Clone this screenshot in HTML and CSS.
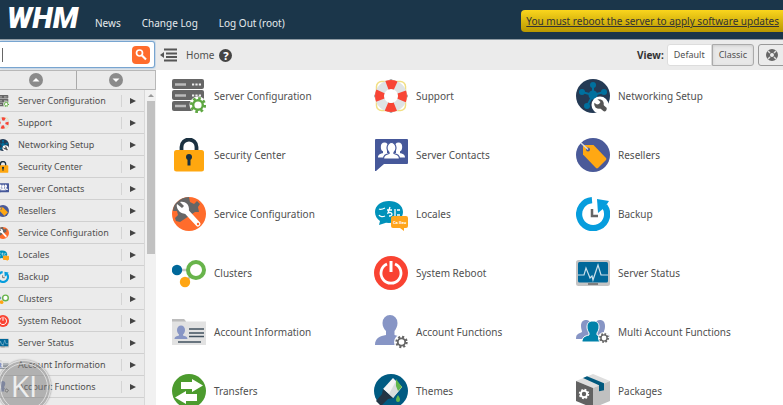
FILE: index.html
```html
<!DOCTYPE html>
<html lang="en">
<head>
<meta charset="utf-8">
<title>WHM</title>
<link rel="stylesheet" href="styles.css">
</head>
<body>
<svg class="defs" aria-hidden="true">
  <symbol id="server-config" viewBox="0 0 34 34">
    <g fill="#666"><rect y="0" width="32" height="10" rx="2"/><rect y="11" width="32" height="10" rx="2"/><rect y="22" width="32" height="10" rx="2"/></g>
    <path d="M3 5.500h11M3 16.500h11M3 27h11" stroke="#bbb" stroke-width="2.500"/>
    <path d="M20 5.500h9M20 16.500h9" stroke="#eee" stroke-width="2.200" stroke-dasharray="2.200 1.200"/>
    <circle cx="26" cy="26" r="8.500" fill="#fff"/>
    <circle cx="26" cy="26" r="6.600" fill="none" stroke="#5fa843" stroke-width="3" stroke-dasharray="2.600 2.580"/>
    <circle cx="26" cy="26" r="4.800" fill="#fff" stroke="#5fa843" stroke-width="2.400"/>
  </symbol>
  <symbol id="support" viewBox="0 0 34 34">
    <rect x="2.500" y="2.500" width="29" height="29" rx="5" fill="none" stroke="#f2df83" stroke-width="1.500"/>
    <circle cx="17" cy="17" r="11.500" fill="none" stroke="#dfe3e4" stroke-width="9"/>
    <circle cx="17" cy="17" r="11.500" fill="none" stroke="#f84535" stroke-width="9" stroke-dasharray="9.030 9.030" stroke-dashoffset="4.515"/>
    <path d="M15 1l2-1 2 1zM15 33l2 1 2-1zM1 15l-1 2 1 2zM33 15l1 2-1 2z" fill="#999"/>
  </symbol>
  <symbol id="network" viewBox="0 0 34 34">
    <circle cx="17" cy="17" r="17" fill="#243a54"/>
    <path d="M17 16V6M17 16l11-3M17 16L6 13M17 16l-6 11M17 16l8 10" stroke="#00709e" stroke-width="2"/>
    <g fill="#00709e"><circle cx="17" cy="16" r="4.500"/><circle cx="17" cy="6" r="3"/><circle cx="28" cy="13" r="3"/><circle cx="6" cy="13" r="3"/><circle cx="11" cy="27" r="3"/></g>
    <circle cx="24" cy="26" r="8.500" fill="#fff"/>
    <path d="M24.500 26.500l4 3.500" stroke="#555" stroke-width="4.500" stroke-linecap="round"/>
    <circle cx="23" cy="25" r="4.800" fill="#555"/><path d="M18 20l2-1 4.500 4-1.500 2-2 .5L17 23z" fill="#fff"/>
  </symbol>
  <symbol id="security" viewBox="0 0 34 34">
    <path d="M9.500 14V9a7.500 7.500 0 0 1 15 0v5" fill="none" stroke="#1b3140" stroke-width="3.800"/>
    <rect x="2" y="12" width="30" height="21.500" rx="2.500" fill="#ffa70f"/>
    <circle cx="17" cy="19" r="3" fill="#1b3140"/><path d="M17 19v8.500" stroke="#1b3140" stroke-width="3"/>
  </symbol>
  <symbol id="contacts" viewBox="0 0 34 34">
    <path d="M2 1h31a1 1 0 0 1 1 1v23a1 1 0 0 1-1 1H10l-8 7H1V2a1 1 0 0 1 1-1z" fill="#46589a"/>
    <g fill="#fff"><ellipse cx="10.500" cy="9" rx="3.700" ry="4.500"/><ellipse cx="24.500" cy="9" rx="3.700" ry="4.500"/><path d="M9 12h4v4H9zM22 12h4v4h-4zM4 19.500c0-3 2-3.500 5-4.500h17c3 1 5 1.500 5 4.500z"/></g>
    <path d="M13 10a4.500 5.500 0 0 1 9 0c0 2-1 3.500-2 4.500v1c3 1 5.500 1.500 5.500 5.500h-16c0-4 2.500-4.500 5.500-5.500v-1c-1-1-2-2.500-2-4.500z" fill="#fff" stroke="#46589a" stroke-width="1.200"/>
  </symbol>
  <symbol id="resellers" viewBox="0 0 34 34">
    <circle cx="17" cy="17" r="17" fill="#4a5a99"/>
    <path d="M8 7h9.500L30 20a1.500 1.500 0 0 1 0 2l-8 8a1.500 1.500 0 0 1-2 0L7 16.500V8a1 1 0 0 1 1-1z" fill="#ffa813"/>
    <circle cx="12" cy="11.500" r="2" fill="#46589a"/><path d="M5 5l7 6.500" stroke="#d5d7e0" stroke-width="1.500"/>
  </symbol>
  <symbol id="service" viewBox="0 0 34 34">
    <circle cx="17" cy="17" r="17" fill="#ff6c2c"/>
    <path d="M4 6C8 2 12 0 17 0l1 5 4 2 3-3 3 3-2 3 1 5h-4L8 25l-4-1-1-3 3-3-1-4H1c0-3 1-6 3-8z" fill="#666"/>
    <path d="M13 13l13 14" stroke="#fff" stroke-width="5" stroke-linecap="round"/>
    <path d="M5 7l5 4 2-2-4-4c5-1 9 2 9 7s-5 6-9 3c-2-2-4-5-3-8z" fill="#fff"/><circle cx="26" cy="27" r="1.200" fill="#ff6c2c"/>
  </symbol>
  <symbol id="locales" viewBox="0 0 34 34">
    <path d="M15 4c8 0 14 4.500 14 11s-6 11-14 11l-3-.3L5 28l1-4c-3-2-5-5-5-9C1 8.500 7 4 15 4z" fill="#0092ba"/>
    <path d="M5 12c2 1 4 0 6-1M5 18c1 2 4 2 6 1M13 13h5M16 10l-2 6c4-2 6 3 1 3M21 12v7M23 13h3M23 18h3" fill="none" stroke="#fff" stroke-width="1.300"/>
    <path d="M19 19h13a2 2 0 0 1 2 2v8a2 2 0 0 1-2 2h-2v3l-4-3h-7a2 2 0 0 1-2-2v-8a2 2 0 0 1 2-2z" fill="#ffa51d"/>
  </symbol>
  <symbol id="backup" viewBox="0 0 34 34">
    <path d="M16 3.200A14 14 0 1 0 28.500 9" fill="none" stroke="#069ddd" stroke-width="6.200"/>
    <path d="M21 2l12 2-2 3-3 4-6 5z" fill="#069ddd"/><path d="M16 12v7h6" fill="none" stroke="#666" stroke-width="2.500"/>
  </symbol>
  <symbol id="clusters" viewBox="0 0 34 34">
    <path d="M5 14h15M13 26l8-8" stroke="#c8c8c8" stroke-width="2.500"/>
    <circle cx="5" cy="14" r="5.200" fill="#00689a"/><circle cx="13" cy="26" r="5.200" fill="#ffa513"/>
    <circle cx="24" cy="14" r="8" fill="#fff" stroke="#68b44b" stroke-width="4"/>
  </symbol>
  <symbol id="reboot" viewBox="0 0 34 34">
    <circle cx="17" cy="17" r="17" fill="#f94332"/>
    <path d="M13 8a10 10 0 1 0 8 0" fill="none" stroke="#fff" stroke-width="2.800"/><path d="M17 5v11" stroke="#fff" stroke-width="3"/>
  </symbol>
  <symbol id="status" viewBox="0 0 34 34">
    <rect y="4" width="34" height="26" rx="2.500" fill="#c4c4c4"/><rect x="2" y="6" width="30" height="20.500" rx="1.500" fill="#00689a"/>
    <path d="M2 19h6l2-7 4 10 2-2 1 4 5-15 3 10h7" fill="none" stroke="#c9e0eb" stroke-width="1.200"/>
    <path d="M12 28h10" stroke="#777" stroke-width="1.800"/>
  </symbol>
  <symbol id="info" viewBox="0 0 34 34">
    <path d="M0 4h12l2 2.500h20V30H0z" fill="#e2e2e2"/><path d="M0 4h12l2 2.500H0z" fill="#bcbcbc"/>
    <path d="M5 15a4 4.500 0 0 1 8 0c0 2-1 3.500-2 4.500v1c2 .5 4.500 1 4.500 3.500h-13c0-2.500 2.500-3 4.500-3.500v-1c-1-1-2-2.500-2-4.500z" fill="#8896c5"/>
    <path d="M17 14h15M17 18h15M17 21.500h15M6 27h23" stroke="#42525f" stroke-width="1.500"/>
  </symbol>
  <symbol id="functions" viewBox="0 0 34 34">
    <path d="M8.500 8a7.500 8 0 0 1 15 0c0 3.500-1.500 6-3 8v4c5 1 8 3 9 10H1c0-7 5-9 11-10v-4c-2-2-3.500-4.500-3.500-8z" fill="#8795c5"/>
    <circle cx="27.500" cy="27" r="7.500" fill="#fff"/><circle cx="27.500" cy="27" r="5" fill="none" stroke="#666" stroke-width="2.400" stroke-dasharray="2 1.927"/><circle cx="27.500" cy="27" r="3.700" fill="none" stroke="#666" stroke-width="1.800"/>
  </symbol>
  <symbol id="multi" viewBox="0 0 34 34">
    <path d="M5 11c0-4 2-6 5-6s5 2 5 6-2 5-2 8v5H0c0-5 2-5 6-7 0-2-1-3-1-6zM19 11c0-4 2-6 5-6s5 2 5 6-1 4-1 6c4 2 6 2 6 7H21z" fill="#8795c5"/>
    <path d="M11 12c0-4 2-6 6-6s6 2 6 6c0 3-1 4-2 6v2c4 1 7 2 7 7H6c0-5 3-6 7-7v-2c-1-2-2-3-2-6z" fill="#0082aa" stroke="#fff"/>
    <circle cx="28" cy="23" r="6" fill="#fff"/><circle cx="28" cy="23" r="4" fill="none" stroke="#666" stroke-width="2" stroke-dasharray="1.600 1.542"/><circle cx="28" cy="23" r="3.100" fill="none" stroke="#666" stroke-width="1.400"/>
  </symbol>
  <symbol id="transfers" viewBox="0 0 34 34">
    <circle cx="17" cy="17" r="17" fill="#4c9b2e"/>
    <path d="M9 8h11V5l11 6.500L20 18v-3H9zM25 20H14v-3L3 23.500 14 30v-3h11z" fill="#fff"/>
  </symbol>
  <symbol id="themes" viewBox="0 0 34 34">
    <circle cx="17" cy="17" r="17" fill="#005b82"/>
    <path d="M19 4l9 9-9 11-10-9z" fill="#f4f4f4"/><path d="M22 7l6 6-9 11-4-4z" fill="#d8dcdc"/><path d="M22 5l6 8-4 4-2-5z" fill="#61b64b"/>
    <path d="M9 15l10 9-5 1-7 7-5-5 6-7z" fill="#233545"/><path d="M24 21c2 3 2 4 2 5a2 2 0 0 1-4 0c0-1 0-2 2-5z" fill="#61b64b"/>
  </symbol>
  <symbol id="packages" viewBox="0 0 34 34">
    <path d="M17 0l17 7-17 7L0 7z" fill="#dedede"/><path d="M0 7l17 7v20L0 27z" fill="#626262"/><path d="M34 7l-17 7v20l17-7z" fill="#c0c0c0"/>
    <path d="M7 4l4-1.700 17 7v7l-5 1v-6z" fill="#00587d"/>
    <circle cx="8" cy="20" r="3.200" fill="none" stroke="#fff" stroke-width="2"/><circle cx="8" cy="20" r="4.500" fill="none" stroke="#fff" stroke-width="1.500" stroke-dasharray="1.800 1.734"/>
  </symbol>
</svg>

<header class="topbar">
  <a class="logo" href="#">WHM</a>
  <nav class="nav"><a href="#">News</a><a href="#">Change Log</a><a href="#">Log Out (root)</a></nav>
  <a class="alert" href="#">You must reboot the server to apply software updates</a>
</header>

<div class="layout">
  <aside class="sidebar">
    <form class="search">
      <input class="search-input" type="text" aria-label="Search">
      <button class="search-button" type="button" aria-label="Search"><svg viewBox="0 0 18 18"><circle cx="7.500" cy="7" r="3" fill="none" stroke="#fff" stroke-width="1.700"/><path d="M10 9.500l4 4" stroke="#fff" stroke-width="2.200"/></svg></button>
    </form>
    <div class="fold">
      <button type="button" aria-label="Collapse all"><svg viewBox="0 0 14 14"><circle cx="7" cy="7" r="7" fill="#8b8b8b"/><path d="M3.500 8.500L7 5l3.500 3.500z" fill="#fff"/></svg></button>
      <button type="button" aria-label="Expand all"><svg viewBox="0 0 14 14"><circle cx="7" cy="7" r="7" fill="#8b8b8b"/><path d="M3.500 5.500L7 9l3.500-3.500z" fill="#fff"/></svg></button>
    </div>
    <div class="menu-area">
      <ul class="menu">
        <li><a href="#"><svg><use href="#server-config"/></svg><span>Server Configuration</span><i></i></a></li>
        <li><a href="#"><svg><use href="#support"/></svg><span>Support</span><i></i></a></li>
        <li><a href="#"><svg><use href="#network"/></svg><span>Networking Setup</span><i></i></a></li>
        <li><a href="#"><svg><use href="#security"/></svg><span>Security Center</span><i></i></a></li>
        <li><a href="#"><svg><use href="#contacts"/></svg><span>Server Contacts</span><i></i></a></li>
        <li><a href="#"><svg><use href="#resellers"/></svg><span>Resellers</span><i></i></a></li>
        <li><a href="#"><svg><use href="#service"/></svg><span>Service Configuration</span><i></i></a></li>
        <li><a href="#"><svg><use href="#locales"/></svg><span>Locales</span><i></i></a></li>
        <li><a href="#"><svg><use href="#backup"/></svg><span>Backup</span><i></i></a></li>
        <li><a href="#"><svg><use href="#clusters"/></svg><span>Clusters</span><i></i></a></li>
        <li><a href="#"><svg><use href="#reboot"/></svg><span>System Reboot</span><i></i></a></li>
        <li><a href="#"><svg><use href="#status"/></svg><span>Server Status</span><i></i></a></li>
        <li><a href="#"><svg><use href="#info"/></svg><span>Account Information</span><i></i></a></li>
        <li><a href="#"><svg><use href="#functions"/></svg><span>Account Functions</span><i></i></a></li>
      </ul>
      <div class="scrollbar"><span class="scroll-up"></span><span class="scroll-thumb"></span></div>
    </div>
  </aside>

  <main class="main">
    <div class="toolbar">
      <button class="toggle" type="button" aria-label="Toggle menu"><svg viewBox="0 0 17 14"><path d="M4 1.500h13M6 5.500h11M6 9h11M4 12.500h13" stroke="#555" stroke-width="1.800"/><path d="M0 7l4-3v6z" fill="#555"/></svg></button>
      <a class="crumb" href="#">Home</a>
      <a class="help" href="#" aria-label="Help">?</a>
      <strong class="view-label">View:</strong>
      <div class="view-group"><button type="button">Default</button><button class="active" type="button">Classic</button></div>
      <button class="assist" type="button" aria-label="Support"><svg viewBox="0 0 12 12"><circle cx="6" cy="6" r="4" fill="none" stroke="#666" stroke-width="4"/><path d="M2 2l2 2M10 2L8 4M2 10l2-2M10 10L8 8" stroke="#ddd" stroke-width="1.500"/></svg></button>
    </div>
    <div class="tiles">
      <a href="#"><svg><use href="#server-config"/></svg>Server Configuration</a>
      <a href="#"><svg><use href="#support"/></svg>Support</a>
      <a href="#"><svg><use href="#network"/></svg>Networking Setup</a>
      <a href="#"><svg><use href="#security"/></svg>Security Center</a>
      <a href="#"><svg><use href="#contacts"/></svg>Server Contacts</a>
      <a href="#"><svg><use href="#resellers"/></svg>Resellers</a>
      <a href="#"><svg><use href="#service"/></svg>Service Configuration</a>
      <a href="#"><svg viewBox="0 0 34 34"><use href="#locales"/><text class="bubble-text" x="19" y="27">Ca lleu</text></svg>Locales</a>
      <a href="#"><svg><use href="#backup"/></svg>Backup</a>
      <a href="#"><svg><use href="#clusters"/></svg>Clusters</a>
      <a href="#"><svg><use href="#reboot"/></svg>System Reboot</a>
      <a href="#"><svg><use href="#status"/></svg>Server Status</a>
      <a href="#"><svg><use href="#info"/></svg>Account Information</a>
      <a href="#"><svg><use href="#functions"/></svg>Account Functions</a>
      <a href="#"><svg><use href="#multi"/></svg>Multi Account Functions</a>
      <a href="#"><svg><use href="#transfers"/></svg>Transfers</a>
      <a href="#"><svg><use href="#themes"/></svg>Themes</a>
      <a href="#"><svg><use href="#packages"/></svg>Packages</a>
    </div>
  </main>
</div>
<div class="badge">KI</div>
</body>
</html>
```
FILE: styles.css
```css
* { box-sizing: border-box; }
body {
  margin: 0;
  height: 100vh;
  display: flex;
  flex-direction: column;
  overflow: hidden;
  background: #fff;
  color: #505050;
  font: 10px/16px "Noto Sans", "Open Sans", sans-serif;
}
a { color: inherit; text-decoration: none; }
button { font: inherit; color: inherit; padding: 0; border: 0; background: none; }
svg { display: block; flex: none; }
.defs { position: absolute; width: 0; height: 0; }

.topbar {
  flex: none;
  height: 40px;
  display: flex;
  align-items: center;
  padding-left: 7px;
  overflow: hidden;
  background: #1b364a;
  border-bottom: 1px solid #8e9aa3;
  color: #e6eaed;
}
.logo {
  width: 88px;
  padding-bottom: 4px;
  color: #fff;
  font: italic 900 30px/34px Roboto, sans-serif;
}
.nav { display: flex; gap: 21px; padding-top: 7px; white-space: nowrap; }
.alert {
  flex: none;
  margin: 2px 0 0 auto;
  padding: 3px 4px 3px 5px;
  border-radius: 4px 0 0 4px;
  background: linear-gradient(#fad51d, #b89800);
  color: #333;
  text-decoration: underline;
  white-space: nowrap;
}

.layout { flex: 1; min-height: 0; display: flex; }
.sidebar {
  flex: none;
  width: 156px;
  display: flex;
  flex-direction: column;
  background: #ebebeb;
  overflow: hidden;
}
.search {
  flex: none;
  display: flex;
  align-items: center;
  height: 27px;
  margin: 1px 1px 2px 0;
  padding: 0 4px 0 2px;
  background: #fff;
  border: 1px solid #78a5d0;
  border-left: 0;
  border-radius: 0 3px 3px 0;
  box-shadow: 0 0 3px #8ab4dc;
}
.search-input {
  flex: 1;
  min-width: 0;
  height: 14px;
  padding: 0 2px;
  border: 0;
  border-left: 1px solid #666;
  outline: 0;
  background: none;
  font: inherit;
}
.search-button { width: 18px; height: 18px; border-radius: 4px; background: #ff6c2c; }
.fold {
  flex: none;
  display: grid;
  grid-template-columns: 76px 1fr;
  height: 20px;
  border: 1px solid #b8b8b8;
  border-left: 0;
}
.fold button { display: flex; align-items: center; justify-content: center; }
.fold button:first-child { padding-right: 4px; }
.fold button + button { border-left: 1px solid #aaa; }
.fold svg { width: 14px; height: 14px; }
.menu-area { flex: 1; min-height: 0; display: flex; }
.menu { flex: 1; margin: 0; padding: 0; list-style: none; font-size: 9px; }
.menu a {
  display: flex;
  align-items: center;
  height: 22px;
  margin-left: -3px;
  border-bottom: 1px solid #d0d0d0;
}
.menu svg { width: 12px; height: 12px; margin-right: 9px; }
.menu span { flex: 1; white-space: nowrap; }
.menu i {
  width: 23px;
  height: 12px;
  display: flex;
  align-items: center;
  justify-content: center;
  border-left: 1px solid #d4d4d4;
}
.menu i::before {
  content: "";
  border: 3px solid transparent;
  border-left: 6px solid #444;
  border-right: 0;
}
.scrollbar {
  flex: none;
  width: 12px;
  display: flex;
  flex-direction: column;
  align-items: center;
  background: #f1f1f1;
  border-left: 1px solid #d8d8d8;
}
.scroll-up { margin: 4px 0; border: 3px solid transparent; border-top: 0; border-bottom-color: #999; }
.scroll-thumb { width: 8px; height: 153px; background: #c1c1c1; }

.main { flex: 1; min-width: 0; overflow: hidden; }
.toolbar {
  display: flex;
  align-items: center;
  height: 30px;
  padding-left: 4px;
  background: #ebebeb;
}
.toggle svg { width: 17px; height: 14px; }
.crumb { margin: 0 5px 0 9px; }
.help {
  width: 13px;
  height: 13px;
  border-radius: 50%;
  background: #444;
  color: #fff;
  font-size: 11px;
  line-height: 13px;
  font-weight: 800;
  text-align: center;
}
.view-label { margin-left: auto; margin-right: 3px; color: #333; }
.view-group { display: flex; font-size: 9px; height: 22px; }
.view-group button { padding: 0 6px; border: 1px solid #ddd; background: #fff; border-radius: 3px 0 0 3px; }
.view-group .active { border-color: #aaa; background: #e8e8e8; border-radius: 0 3px 3px 0; box-shadow: inset 0 1px 3px #ccc; }
.assist {
  flex: none;
  display: flex;
  align-items: center;
  justify-content: center;
  width: 28px;
  height: 22px;
  margin: 0 -3px 0 4px;
  border: 1px solid #999;
  border-radius: 3px;
}
.assist svg { width: 12px; height: 12px; }
.tiles {
  display: grid;
  grid-template-columns: repeat(3, 1fr);
  grid-auto-rows: 59px;
  padding: 0 5px 0 16px;
  margin-top: -4px;
}
.tiles a { display: flex; align-items: center; gap: 8px; white-space: nowrap; }
.tiles svg { width: 34px; height: 34px; }
.bubble-text { font-size: 4px; font-weight: 700; fill: #fff; }

.badge {
  position: absolute;
  left: -3px;
  bottom: -9px;
  width: 54px;
  height: 54px;
  border: 4px double #ddd;
  border-radius: 50%;
  background: rgba(120, 120, 120, 0.5);
  box-shadow: 0 0 2px #777;
  color: #eee;
  font: 500 30px/44px "Open Sans", sans-serif;
  text-align: center;
}
```
